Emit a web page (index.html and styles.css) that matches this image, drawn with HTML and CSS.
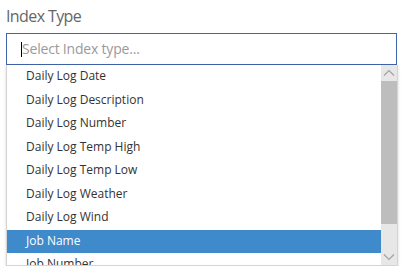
FILE: index.html
```html
<!DOCTYPE html>
<html>
<head>
<meta charset="utf-8">
<link rel="stylesheet" href="styles.css">
</head>
<body>
<div class="field">
  <div class="label">Index Type</div>
  <div class="input"><span class="caret"></span><span class="placeholder">Select Index type...</span></div>
  <div class="dropdown">
    <ul class="list">
      <li class="item">Daily Log Date</li>
      <li class="item">Daily Log Description</li>
      <li class="item">Daily Log Number</li>
      <li class="item">Daily Log Temp High</li>
      <li class="item">Daily Log Temp Low</li>
      <li class="item">Daily Log Weather</li>
      <li class="item">Daily Log Wind</li>
      <li class="item selected">Job Name</li>
      <li class="item">Job Number</li>
    </ul>
    <div class="scrollbar">
      <div class="arrow">
        <svg width="12" height="8" viewBox="0 0 12 8"><path d="M1 6.5 L6 1.5 L11 6.5" fill="none" stroke="#a3a3a3" stroke-width="1.2"/></svg>
      </div>
      <div class="thumb"></div>
      <div class="track"></div>
      <div class="arrow down">
        <svg width="12" height="8" viewBox="0 0 12 8"><path d="M1 1.5 L6 6.5 L11 1.5" fill="none" stroke="#a3a3a3" stroke-width="1.2"/></svg>
      </div>
    </div>
  </div>
</div>
</body>
</html>
```
FILE: styles.css
```css
html, body {
  margin: 0;
  padding: 0;
  background: #ffffff;
}
body {
  font-family: "Open Sans", "Noto Sans", sans-serif;
}
.field {
  padding: 5px 0 0 6px;
  width: 392px;
}
.label {
  font-size: 16px;
  letter-spacing: -0.6px;
  line-height: 23px;
  color: #666666;
  height: 28px;
}
.input {
  box-sizing: border-box;
  width: 391px;
  height: 32px;
  border: 1px solid #4064ad;
  display: flex;
  align-items: center;
  padding-left: 14px;
}
.caret {
  display: inline-block;
  width: 1px;
  height: 15px;
  background: #000;
}
.placeholder {
  font-size: 14px;
  letter-spacing: -0.2px;
  color: #9a9a9a;
  line-height: 20px;
}
.dropdown {
  box-sizing: border-box;
  width: 392px;
  height: 201px;
  border: 1px solid #d4d4d4;
  border-top: none;
  box-shadow: 0 1px 3px rgba(0,0,0,0.15);
  display: flex;
  overflow: hidden;
}
.list {
  list-style: none;
  margin: 0;
  padding: 0;
  flex: 1;
  overflow: hidden;
}
.item {
  height: 23.5px;
  line-height: 22.5px;
  padding-left: 19px;
  font-size: 12px;
  color: #333333;
  white-space: nowrap;
}
.item.selected {
  background: #3e8acb;
  color: #ffffff;
}
.scrollbar {
  width: 16px;
  background: #e7e7e7;
  display: flex;
  flex-direction: column;
}
.arrow {
  height: 16px;
  display: flex;
  align-items: center;
  justify-content: center;
}
.thumb {
  height: 143px;
  background: #bdbdbd;
}
.track {
  flex: 1;
}
```
